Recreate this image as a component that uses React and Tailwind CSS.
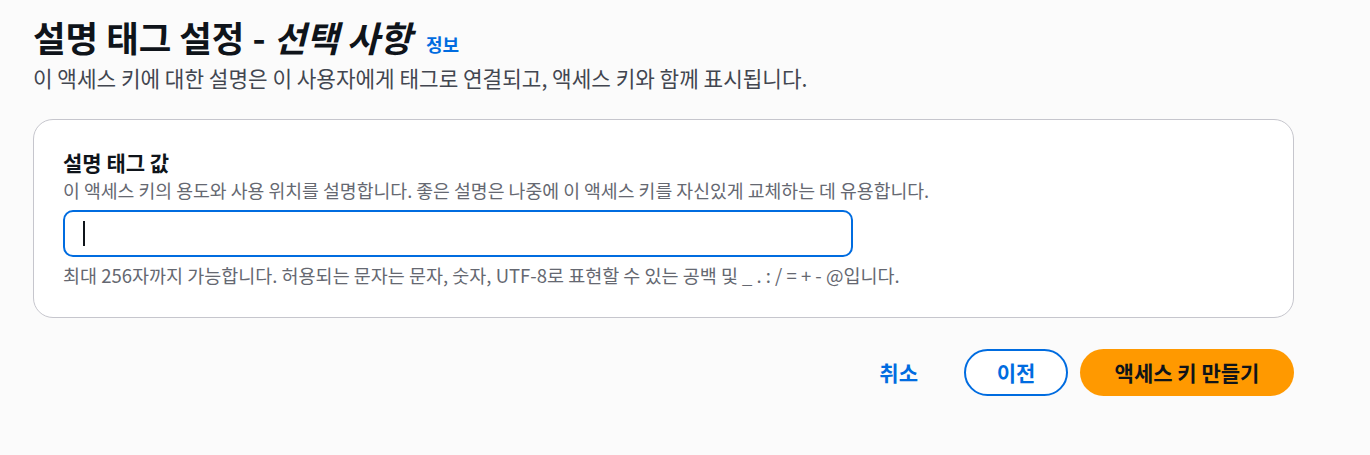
import React from 'react';

const font = { fontFamily: '"Noto Sans CJK KR", "Noto Sans", sans-serif' };

export default function App() {
    return (
        <div className="w-full min-h-screen bg-[#fbfbfb] text-[#0f141a] px-[33px] pt-[14px]" style={font}>
            {/* Header */}
            <div className="flex items-baseline gap-[14px]">
                <h1 className="text-[35.4px] font-bold leading-[46px]">
                    설명 태그 설정 - <span className="italic">선택 사항</span>
                </h1>
                <a className="text-[18px] font-bold text-[#006ce0]">정보</a>
            </div>
            <p className="text-[21.3px] leading-[28px] text-[#424650] mt-[4px]">
                이 액세스 키에 대한 설명은 이 사용자에게 태그로 연결되고, 액세스 키와 함께 표시됩니다.
            </p>

            {/* Card */}
            <div className="mt-[27px] w-[1261px] bg-white border border-[#c6c6cd] rounded-[20px] px-[29px] pt-[28px] pb-[29px]">
                <div className="text-[21px] font-bold leading-[28px]">설명 태그 값</div>
                <div className="text-[18.3px] leading-[26px] text-[#656871] mt-[1px]">
                    이 액세스 키의 용도와 사용 위치를 설명합니다. 좋은 설명은 나중에 이 액세스 키를 자신있게 교체하는 데 유용합니다.
                </div>
                <div className="mt-[7px] w-[790px] h-[47px] border-2 border-[#006ce0] rounded-[10px] flex items-center px-[18px]">
                    <div className="w-[2px] h-[25px] bg-[#0f141a]"></div>
                </div>
                <div className="text-[18.5px] leading-[26px] text-[#656871] mt-[5px]">
                    최대 256자까지 가능합니다. 허용되는 문자는 문자, 숫자, UTF-8로 표현할 수 있는 공백 및 _ . : / = + - @입니다.
                </div>
            </div>

            {/* Actions */}
            <div className="w-[1261px] flex justify-end items-center mt-[31px] gap-[12px]">
                <button className="text-[21px] font-bold text-[#006ce0] pl-[20px] pr-[34px] h-[47px]">취소</button>
                <button className="text-[21px] font-bold text-[#006ce0] w-[104px] h-[47px] border-2 border-[#006ce0] rounded-full bg-white">이전</button>
                <button className="text-[21px] font-bold text-[#0f141a] w-[214px] h-[47px] rounded-full bg-[#ff9900]">액세스 키 만들기</button>
            </div>
        </div>
    );
}
